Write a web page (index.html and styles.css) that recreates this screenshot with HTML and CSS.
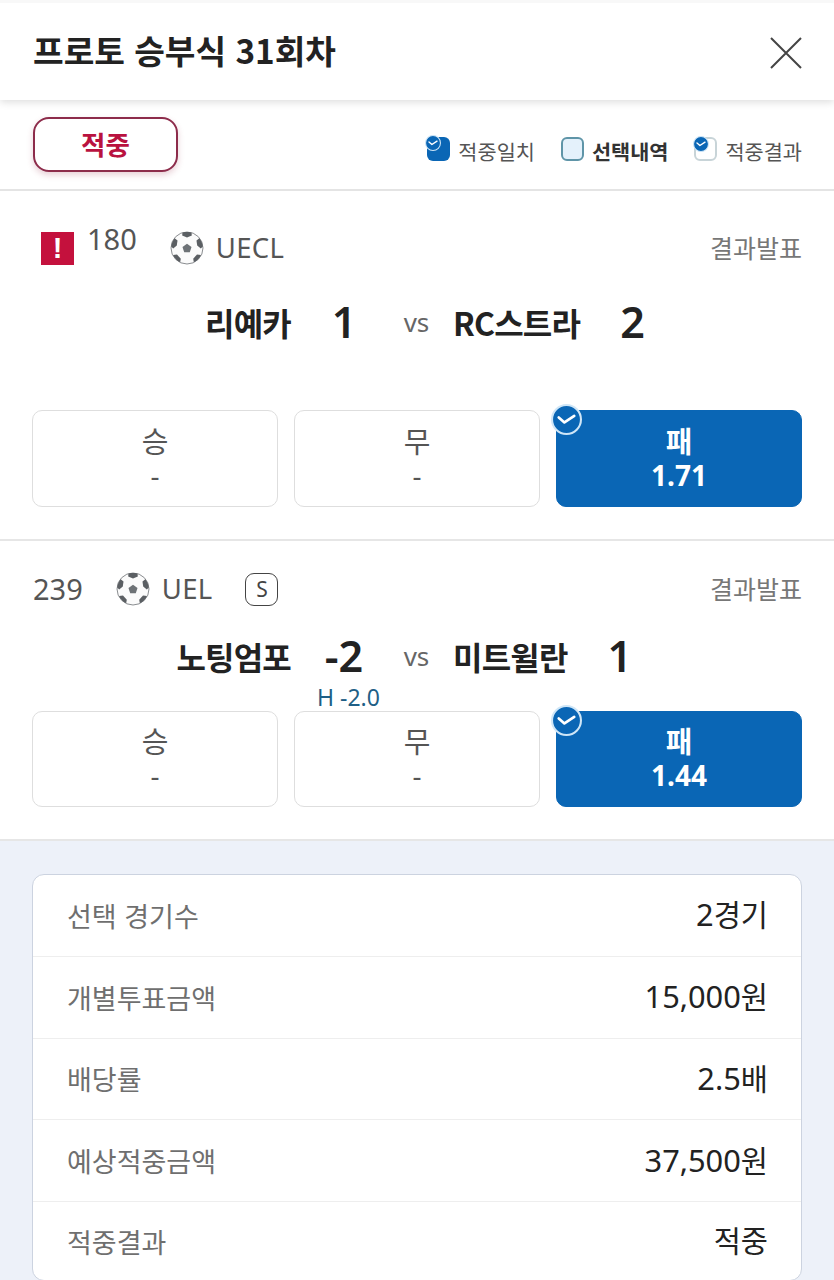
FILE: index.html
```html
<!DOCTYPE html>
<html lang="ko">
<head>
<meta charset="utf-8">
<title>프로토 승부식 31회차</title>
<link rel="stylesheet" href="styles.css">
</head>
<body>
<svg class="defs" width="0" height="0" aria-hidden="true">
  <defs>
    <symbol id="ball" viewBox="0 0 34 34">
      <circle cx="17" cy="17" r="16" fill="#fbfbfb" stroke="#8a8d90" stroke-width="1"/>
      <path d="M17 12.800l4.500 3.300-1.700 5.200h-5.600l-1.700-5.200z" fill="#6d7276"/>
      <path d="M12.500 1.500C14 1.100 15.500 1 17 1s3 .1 4.500.5L21.800 4.500 17 6.500 12.200 4.500z" fill="#5b5f63"/>
      <path d="M1.200 15.500C1.500 12 2.800 9.500 4.700 7.200L7.500 9.500 6.800 14.500 3.200 17.500z" fill="#5b5f63"/>
      <path d="M32.800 15.500C32.500 12 31.200 9.500 29.300 7.200L26.500 9.500 27.200 14.500 30.800 17.500z" fill="#5b5f63"/>
      <path d="M6.300 28.800C5 27.500 3.800 25.800 3 24L7 23.500 10.800 27.800 10.200 31.300C8.800 30.700 7.500 29.900 6.300 28.800z" fill="#5b5f63"/>
      <path d="M27.700 28.800C29 27.500 30.200 25.800 31 24L27 23.500 23.200 27.800 23.800 31.300C25.200 30.700 26.500 29.900 27.700 28.800z" fill="#5b5f63"/>
    </symbol>
    <symbol id="tick" viewBox="0 0 30 30">
      <circle cx="15" cy="15" r="14" fill="#0a66b5" stroke="#cfe6f7" stroke-width="2"/>
      <path d="M7.500 13l5.500 4.800 9.500-6.300" fill="none" stroke="#fff" stroke-width="2.600" stroke-linecap="round" stroke-linejoin="round"/>
    </symbol>
  </defs>
</svg>

<header class="topbar">
  <h1 class="title">프로토 승부식 31회차</h1>
  <button class="close" type="button" aria-label="닫기">
    <svg width="32" height="32" viewBox="0 0 32 32"><path d="M1 1l30 30M31 1L1 31" fill="none" stroke="#444" stroke-width="2"/></svg>
  </button>
</header>

<section class="status">
  <span class="hit-badge">적중</span>
  <ul class="legend">
    <li class="legend-item">
      <span class="swatch swatch-match"><svg class="swatch-tick" viewBox="0 0 30 30"><use href="#tick"/></svg></span>적중일치
    </li>
    <li class="legend-item legend-strong">
      <span class="swatch swatch-pick"></span>선택내역
    </li>
    <li class="legend-item">
      <span class="swatch swatch-result"><svg class="swatch-tick" viewBox="0 0 30 30"><use href="#tick"/></svg></span>적중결과
    </li>
  </ul>
</section>

<section class="match match-first">
  <div class="meta">
    <div class="meta-left">
      <span class="alert">!</span>
      <span class="game-no game-no-raised">180</span>
      <svg class="ball"><use href="#ball"/></svg>
      <span class="league">UECL</span>
    </div>
    <span class="state">결과발표</span>
  </div>
  <div class="teams teams-first">
    <div class="home"><span class="team">리예카</span><span class="score">1</span></div>
    <span class="vs">VS</span>
    <div class="away"><span class="team">RC스트라</span><span class="score">2</span></div>
  </div>
  <div class="odds">
    <div class="odd"><span class="odd-name">승</span><span class="odd-val">-</span></div>
    <div class="odd"><span class="odd-name">무</span><span class="odd-val">-</span></div>
    <div class="odd odd-on"><svg class="odd-tick"><use href="#tick"/></svg><span class="odd-name">패</span><span class="odd-val">1.71</span></div>
  </div>
</section>

<section class="match match-second">
  <div class="meta">
    <div class="meta-left">
      <span class="game-no">239</span>
      <svg class="ball"><use href="#ball"/></svg>
      <span class="league">UEL</span>
      <span class="s-tag">S</span>
    </div>
    <span class="state">결과발표</span>
  </div>
  <div class="teams teams-second">
    <div class="home"><span class="team">노팅엄포</span><span class="score">-2</span></div>
    <span class="vs">VS</span>
    <div class="away"><span class="team">미트윌란</span><span class="score">1</span></div>
  </div>
  <div class="odds odds-short">
    <div class="odd"><span class="odd-name">승</span><span class="odd-val">-</span></div>
    <div class="odd"><span class="handicap">H -2.0</span><span class="odd-name">무</span><span class="odd-val">-</span></div>
    <div class="odd odd-on"><svg class="odd-tick"><use href="#tick"/></svg><span class="odd-name">패</span><span class="odd-val">1.44</span></div>
  </div>
</section>

<section class="summary">
  <dl class="card">
    <div class="row"><dt>선택 경기수</dt><dd><span class="num">2</span>경기</dd></div>
    <div class="row"><dt>개별투표금액</dt><dd><span class="num">15,000</span>원</dd></div>
    <div class="row"><dt>배당률</dt><dd><span class="num">2.5</span>배</dd></div>
    <div class="row"><dt>예상적중금액</dt><dd><span class="num">37,500</span>원</dd></div>
    <div class="row"><dt>적중결과</dt><dd>적중</dd></div>
  </dl>
</section>
</body>
</html>
```

FILE: styles.css
```css
* { box-sizing: border-box; }
html, body { margin: 0; padding: 0; }
html { height: 1280px; overflow: hidden; }
body {
  width: 834px;
  background: #fff;
  color: #222;
  font-family: "Noto Sans CJK KR", "Noto Sans", sans-serif;
}
.defs { position: absolute; }

.topbar {
  height: 100px;
  border-top: 3px solid #f8f8f8;
  padding: 0 32px 0 33px;
  display: flex;
  align-items: center;
  justify-content: space-between;
  background: #fff;
  box-shadow: 0 2px 8px rgba(0, 0, 0, .14);
  position: relative;
}
.title { margin: 0 0 3px; font-size: 33.300px; font-weight: 700; line-height: 44px; color: #222; }
.close { width: 32px; height: 32px; margin-top: 2px; padding: 0; border: 0; background: none; display: block; }
.close svg { display: block; }

.status {
  height: 91px;
  padding: 0 32px 0 33px;
  border-bottom: 2px solid #e4e4e4;
  display: flex;
  align-items: center;
  justify-content: space-between;
}
.hit-badge {
  width: 145px;
  height: 55px;
  margin-top: -1px;
  border: 2px solid #8d2c4b;
  border-radius: 16px;
  display: flex;
  align-items: center;
  justify-content: center;
  padding-bottom: 2px;
  color: #b9123f;
  font-size: 26.500px;
  font-weight: 700;
  box-shadow: 0 3px 6px rgba(150, 40, 70, .22);
}
.legend { list-style: none; margin: 0 0 -12px; padding: 0; display: flex; gap: 26px; }
.legend-item { display: flex; align-items: center; gap: 8px; font-size: 20.800px; line-height: 28px; color: #555; }
.legend-strong { font-weight: 700; color: #333; }
.swatch { width: 23px; height: 24px; border-radius: 6px; display: block; position: relative; margin-top: -1px; margin-bottom: 3px; }
.swatch-match { background: #0a66b5; }
.swatch-pick { background: #e4f1fb; border: 2px solid #5f95a8; }
.swatch-result { background: #fff; border: 2px solid #c8d4d8; }
.swatch-tick { position: absolute; left: -2px; top: -2px; width: 16px; height: 16px; }
.swatch-result .swatch-tick { left: -3px; top: -3px; }

.match { border-bottom: 2px solid #e6e6e6; padding: 0 32px; }
.match-first { height: 350px; }
.match-second { height: 300px; }

.meta { display: flex; align-items: center; justify-content: space-between; }
.match-first .meta { height: 114px; }
.match-second .meta { height: 96px; }
.meta-left { display: flex; align-items: center; color: #555; font-size: 27.500px; line-height: 36px; }
.state { font-size: 25px; color: #777; margin-bottom: 3px; }
.alert {
  width: 33px;
  height: 33px;
  margin: 0 13px 0 9px;
  background: #c4113d;
  color: #fff;
  font: 700 29px/33px "Liberation Sans", sans-serif;
  text-align: center;
}
.game-no { font-family: "Noto Sans", sans-serif; font-size: 29px; }
.game-no-raised { margin-top: -19px; }
.match-second .game-no { margin-left: 1px; }
.ball { width: 34px; height: 34px; flex: none; margin: 0 12px 0 33px; }
.league { font-family: "Noto Sans", sans-serif; letter-spacing: .3px; }
.s-tag {
  width: 33px;
  height: 33px;
  margin-left: 33px;
  border: 1.500px solid #444;
  border-radius: 9px;
  font: 400 21px/30px "Noto Sans", sans-serif;
  text-align: center;
  color: #444;
}

.teams { display: grid; grid-template-columns: 347px 75px 1fr; align-items: center; height: 48px; }
.teams-first { margin-top: -7px; }
.teams-second { margin-top: -5px; }
.home { display: flex; align-items: center; justify-content: flex-end; }
.home .score { width: 70px; margin-left: 18px; text-align: center; }
.away { display: flex; align-items: center; gap: 40px; margin-left: -1px; }
.team { font-size: 32px; font-weight: 700; letter-spacing: -.8px; color: #222; line-height: 48px; }
.score { font-family: "Noto Sans", sans-serif; font-size: 43px; font-weight: 600; line-height: 48px; color: #222; }
.vs { text-align: center; font: 400 26px/28px "Noto Sans", sans-serif; color: #666; text-transform: lowercase; }

.odds { display: grid; grid-template-columns: repeat(3, 1fr); gap: 16px; height: 97px; }
.match-first .odds { margin-top: 64px; }
.match-second .odds { height: 96px; margin-top: 31px; }
.odd {
  position: relative;
  border: 1.500px solid #dedede;
  border-radius: 10px;
  padding-bottom: 2px;
  display: flex;
  flex-direction: column;
  align-items: center;
  justify-content: center;
  color: #555;
  background: #fff;
}
.odd-on { background: #0a66b5; border-color: #0a66b5; color: #fff; font-weight: 700; }
.odd-name { font-size: 29px; line-height: 35px; }
.odd-val { font-family: "Noto Sans", sans-serif; font-size: 28px; line-height: 35px; }
.odd-tick { position: absolute; left: -6px; top: -7px; width: 31px; height: 31px; }
.handicap {
  position: absolute;
  left: 22px;
  top: -28px;
  font: 400 23px/26px "Noto Sans", sans-serif;
  color: #1f5f86;
  white-space: nowrap;
}

.summary { height: 440px; background: #edf1f9; padding: 33px 32px 0; }
.card { margin: 0; background: #fff; border: 1.500px solid #ccd3e0; border-radius: 12px; }
.row {
  height: 81.750px;
  padding: 0 33px;
  display: flex;
  align-items: center;
  justify-content: space-between;
  border-bottom: 1.500px solid #eeeeee;
}
.row:last-child { border-bottom: 0; height: 78px; }
.row dt { font-size: 27px; color: #6f6f6f; padding-left: 1px; }
.row dd { margin: 0 0 3px; font-family: "Noto Sans", "Noto Sans CJK KR", sans-serif; font-size: 29.500px; color: #222; }
.num { font-size: 30.800px; }
```
